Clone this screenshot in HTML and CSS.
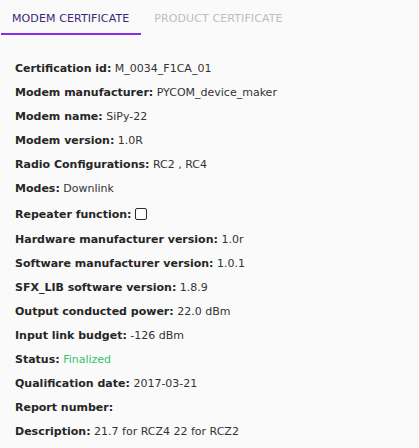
FILE: index.html
```
<!DOCTYPE html>
<html>
<head>
<meta charset="utf-8">
<link rel="stylesheet" href="styles.css">
</head>
<body>
<div class="tabs">
  <div class="tab active">MODEM CERTIFICATE</div>
  <div class="tab">PRODUCT CERTIFICATE</div>
</div>
<div class="details">
  <div class="row"><b>Certification id:</b> M_0034_F1CA_01</div>
  <div class="row"><b>Modem manufacturer:</b> PYCOM_device_maker</div>
  <div class="row"><b>Modem name:</b> SiPy-22</div>
  <div class="row"><b>Modem version:</b> 1.0R</div>
  <div class="row"><b>Radio Configurations:</b> RC2 , RC4</div>
  <div class="row"><b>Modes:</b> Downlink</div>
  <div class="row check-row"><b>Repeater function:</b> <input type="checkbox" class="check"></div>
  <div class="row"><b>Hardware manufacturer version:</b> 1.0r</div>
  <div class="row"><b>Software manufacturer version:</b> 1.0.1</div>
  <div class="row"><b>SFX_LIB software version:</b> 1.8.9</div>
  <div class="row"><b>Output conducted power:</b> 22.0 dBm</div>
  <div class="row"><b>Input link budget:</b> -126 dBm</div>
  <div class="row"><b>Status:</b> <span class="ok">Finalized</span></div>
  <div class="row"><b>Qualification date:</b> 2017-03-21</div>
  <div class="row"><b>Report number:</b></div>
  <div class="row"><b>Description:</b> 21.7 for RCZ4 22 for RCZ2</div>
</div>
</body>
</html>
```
FILE: styles.css
```
html, body {
  margin: 0;
  padding: 0;
  background: #fafafa;
}
body {
  font-family: "DejaVu Sans", Verdana, sans-serif;
  font-size: 11px;
  color: #333;
}
.tabs {
  display: flex;
  padding-left: 1px;
}
.tab {
  padding: 12px 12px 8px 11px;
  line-height: 13px;
  color: #bdbdbd;
  letter-spacing: 0.1px;
  border-bottom: 2px solid transparent;
}
.tab + .tab {
  padding-left: 13px;
}
.tab.active {
  color: #3a2778;
  border-bottom-color: #8a2cf0;
}
.details {
  display: flex;
  flex-direction: column;
  gap: 11px;
  padding: 27px 15px 0 15px;
}
.row {
  line-height: 13px;
  height: 13px;
  white-space: nowrap;
}
.row b {
  color: #262626;
}
.check-row {
  height: 16px;
  display: flex;
  align-items: center;
  gap: 4px;
}
.check {
  appearance: none;
  -webkit-appearance: none;
  margin: 0;
  width: 12px;
  height: 12px;
  box-sizing: border-box;
  border: 1px solid #2b2b2b;
  border-radius: 2px;
  background: #fff;
}
.ok {
  color: #36c265;
}
```
